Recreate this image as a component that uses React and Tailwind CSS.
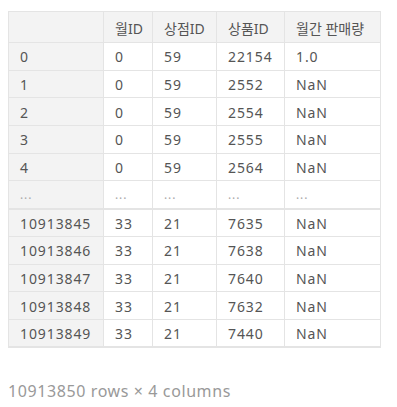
import React from "react";

const rows = [
  ["0", "0", "59", "22154", "1.0"],
  ["1", "0", "59", "2552", "NaN"],
  ["2", "0", "59", "2554", "NaN"],
  ["3", "0", "59", "2555", "NaN"],
  ["4", "0", "59", "2564", "NaN"],
  ["...", "...", "...", "...", "..."],
  ["10913845", "33", "21", "7635", "NaN"],
  ["10913846", "33", "21", "7638", "NaN"],
  ["10913847", "33", "21", "7640", "NaN"],
  ["10913848", "33", "21", "7632", "NaN"],
  ["10913849", "33", "21", "7440", "NaN"],
];

const widths = ["w-[95px]", "w-[49px]", "w-[64px]", "w-[68px]", "w-[96px]"];

export default function App() {
  return (
    <div
      className="bg-white w-[397px] h-[407px] pt-[11px] pl-[8px] text-[#555]"
      style={{ fontFamily: '"Noto Sans", "Noto Sans CJK KR", sans-serif' }}
    >
      <table className="table-fixed w-[372px] border-collapse text-[14px] tracking-[0.9px] border-b-2 border-[#e4e4e4] whitespace-nowrap">
        <thead>
          <tr className="h-[31px] bg-[#f3f3f3]">
            {["", "월ID", "상점ID", "상품ID", "월간 판매량"].map((h, i) => (
              <th
                key={i}
                className={`${widths[i]} border border-[#e4e4e4] pl-[11px] pr-0 pt-[2px] text-left font-normal tracking-normal`}
              >
                {h}
              </th>
            ))}
          </tr>
        </thead>
        <tbody>
          {rows.map((r, ri) => (
            <tr
              key={ri}
              className={`h-[27.7px] ${ri === 5 ? "border-b-2 border-[#e4e4e4]" : ""}`}
            >
              {r.map((c, ci) => (
                <td
                  key={ci}
                  className={`border-x border-t border-[#e4e4e4] pl-[11px] pr-0 pt-[1px] ${
                    ci === 0 ? "bg-[#f3f3f3]" : ""
                  } ${c === "..." ? "text-[#aaa] text-[12px]" : ""}`}
                >
                  {c}
                </td>
              ))}
            </tr>
          ))}
        </tbody>
      </table>
      <div className="mt-[31px] text-[16px] text-[#999] tracking-[0.6px]">
        10913850 rows × 4 columns
      </div>
    </div>
  );
}
